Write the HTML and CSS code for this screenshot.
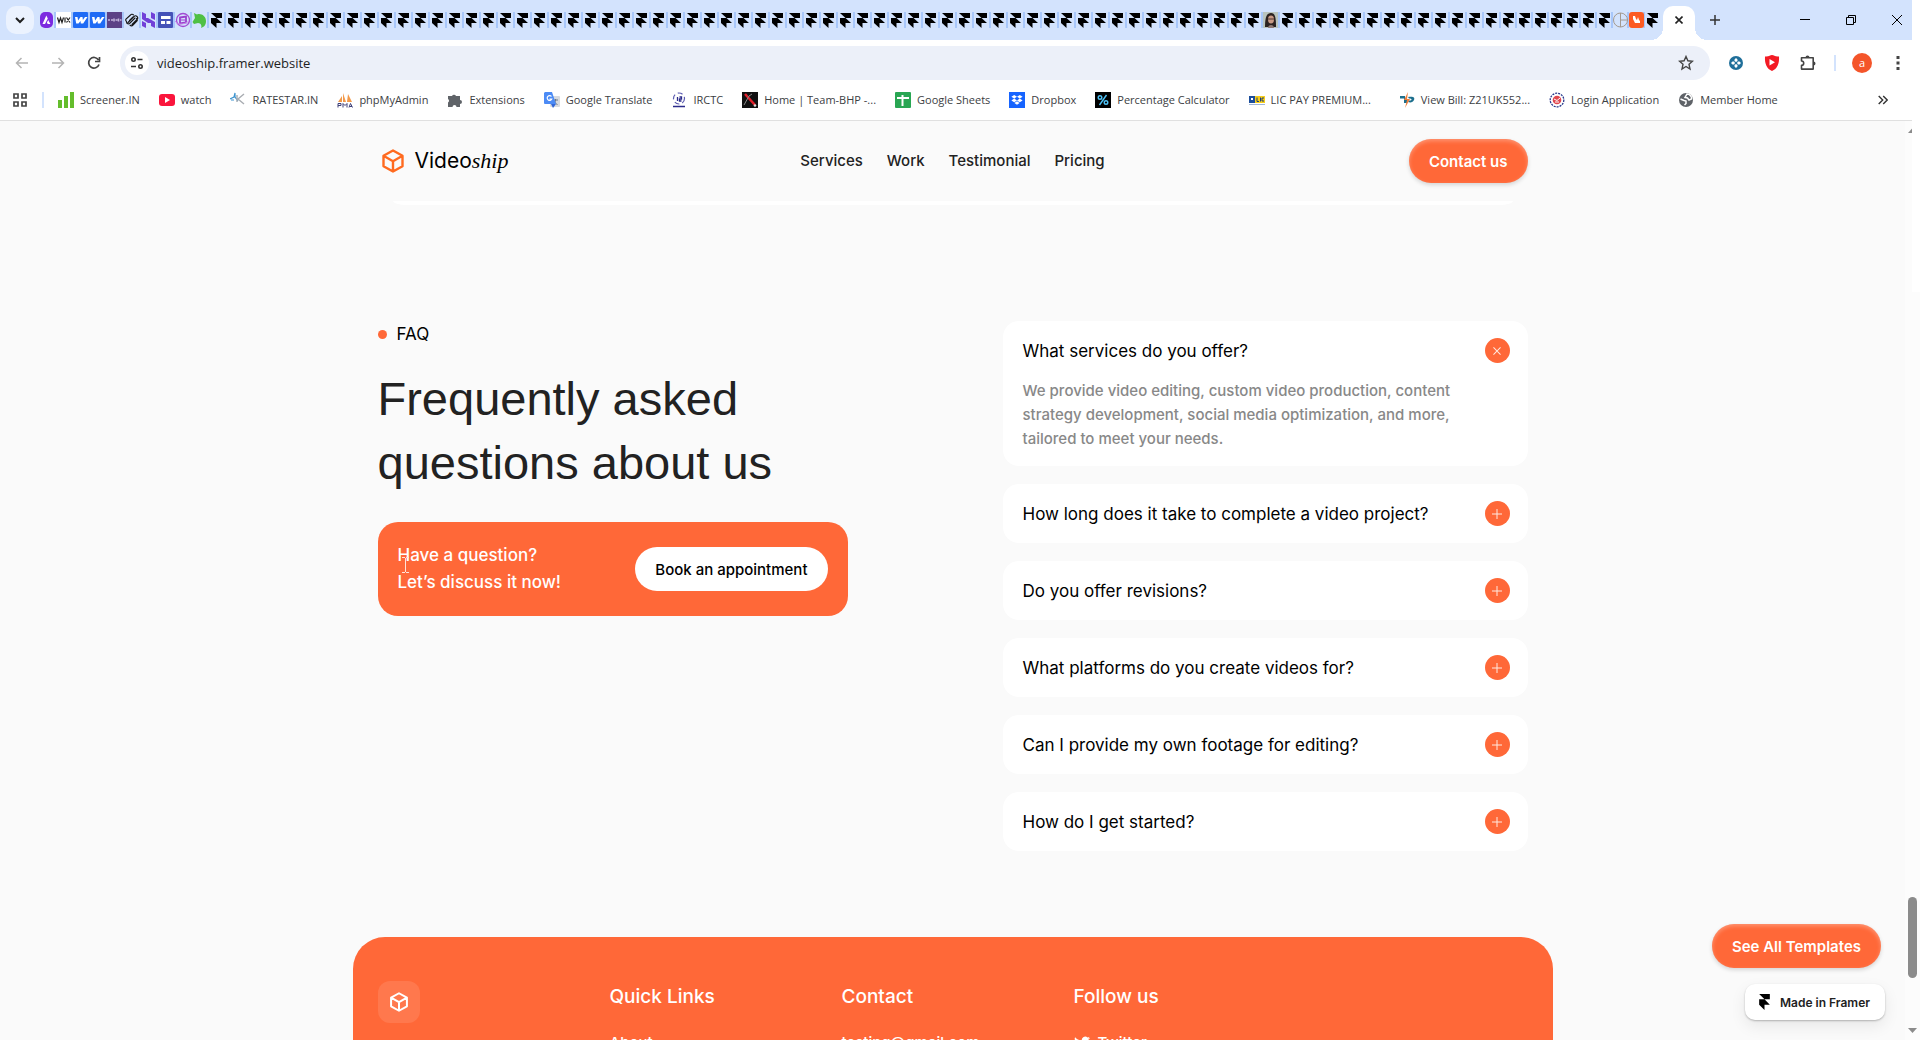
FILE: index.html
```html
<!DOCTYPE html>
<html lang="en">
<head>
<meta charset="utf-8">
<meta name="viewport" content="width=device-width, initial-scale=1">
<title>Videoship</title>
<link rel="stylesheet" href="styles.css">
</head>
<body>
<svg class="defs" aria-hidden="true">
  <symbol id="framer" viewBox="0 0 16 24"><path d="M0 0h16v8H8zM0 8h8l8 8H8v8l-8-8z"/></symbol>
  <symbol id="cube" viewBox="0 0 24 24"><path d="M12 1.500l9.500 5.300v10.400L12 22.500l-9.500-5.300V6.800zM2.500 6.800L12 12.200l9.500-5.400M12 12.200v10.300" fill="none" stroke="currentColor" stroke-width="2.400" stroke-linejoin="round"/></symbol>
  <symbol id="webflow" viewBox="0 0 15 16"><rect width="15" height="16" rx="1" fill="#1f6bf5"/><path d="M2 5h2.500l.6 3.500L7.500 5h2l.4 3L12 5h2.500l-4.300 6.500H7.800L7.500 9l-2 2.500H3.200z" fill="#fff"/></symbol>
  <symbol id="plus" viewBox="0 0 12 12"><path d="M6 1v10M1 6h10" stroke="currentColor" fill="none"/></symbol>
</svg>

<header class="browser">
  <div class="tabstrip">
    <button class="tab-search" aria-label="Search tabs"><svg width="10" height="7" viewBox="0 0 10 7"><path d="M1 1l4 4 4-4" fill="none" stroke="#1f1f1f" stroke-width="2"/></svg></button>
    <div class="tabs">
      <span class="tab"><svg width="15" height="16" viewBox="0 0 15 16"><rect x="1" width="13" height="16" rx="5" fill="#7c2be0"/><path d="M3.500 12l3.800-8.500 1.500 3L6 12zM9.200 8l2.200 4H8.700l-.8-1.500z" fill="#fff"/></svg></span>
      <span class="tab"><svg width="15" height="16" viewBox="0 0 15 16"><rect width="15" height="16" fill="#fff"/><path d="M1.500 5.500l1.500 5 1.500-4.500L6 10.500l1.500-5M9 5.500v5M10.500 5.500l3.500 5M14 5.500l-3.500 5" fill="none" stroke="#222" stroke-width="1.200"/></svg></span>
      <span class="tab"><svg width="15" height="16"><use href="#webflow"/></svg></span>
      <span class="tab"><svg width="15" height="16"><use href="#webflow"/></svg></span>
      <span class="tab"><svg width="15" height="16" viewBox="0 0 15 16"><rect width="15" height="16" fill="#5c4186"/><path d="M1 8h2M4 8h2M7 6.500v3M8.500 8h2M11.500 6.500v3M13 8h1.500" stroke="#c3b5dc" stroke-width="1.600"/></svg></span>
      <span class="tab"><svg width="15" height="16" viewBox="0 0 15 16"><g fill="none" stroke="#161616" stroke-width="1.100" stroke-linecap="round"><path d="M4 10.500L10 4.500a2 2 0 013 3L8 12.500M2.500 9.500a2 2 0 01-.5-2.500L6.500 3a2 2 0 013-.2M5.500 8.500L9 5M11 6L5.500 11.500a2 2 0 01-3-1M12.500 6.500a2 2 0 01.5 2.500L9 13.200a2 2 0 01-3 0"/></g></svg></span>
      <span class="tab"><svg width="15" height="16" viewBox="0 0 15 16"><path d="M1 0l4 2v4h2l7 4v6l-4-2v-3H7L1 7zM10 0l4 2v6l-4-2zM1 9l4 2v5l-4-2z" fill="#7140d8"/></svg></span>
      <span class="tab"><svg width="15" height="16" viewBox="0 0 15 16"><rect width="15" height="16" rx="1" fill="#4452b8"/><path d="M3 4h9.500v3H3zM3 9h4v3H3zM8.500 9h4v3h-4z" fill="#fff"/></svg></span>
      <span class="tab"><svg width="15" height="16" viewBox="0 0 15 16"><circle cx="8" cy="8" r="6.500" fill="none" stroke="#a24bd2" stroke-width="1.300"/><path d="M5 5.500l6-1v6l-6 1z" fill="none" stroke="#9b3fcd" stroke-width="1.800"/><path d="M6 8h4" stroke="#9b3fcd"/><path d="M0 9c2 4 9 4 14 0" fill="none" stroke="#c78ae8"/></svg></span>
      <span class="tab"><svg width="15" height="16" viewBox="0 0 15 16"><path d="M2 1l3 1.500C9 1 14 4 14 9c0 4-2 6-5 7 1-2 0-5-3-5l-4 1-1.500-2L3 6z" fill="#4fc044"/></svg></span>
    </div>
    <button class="active-tab" aria-label="Close tab"><svg width="8" height="8" viewBox="0 0 8 8"><path d="M.5.5l7 7M7.500.5l-7 7" stroke="#222" stroke-width="1.600"/></svg></button>
    <button class="icon-btn new-tab" aria-label="New tab"><svg width="10" height="10" viewBox="0 0 10 10"><path d="M5 0v10M0 5h10" stroke="#333" stroke-width="1.500"/></svg></button>
    <div class="window-controls">
      <button class="icon-btn" aria-label="Minimize"><svg width="10" height="10"><path d="M0 4.500h10" stroke="#000"/></svg></button>
      <button class="icon-btn" aria-label="Restore"><svg width="10" height="10" viewBox="0 0 10 10"><path d="M.5 2.500h7v7h-7zM2.500 2.500v-2h7v7h-2" fill="none" stroke="#000"/></svg></button>
      <button class="icon-btn" aria-label="Close window"><svg width="10" height="10" viewBox="0 0 10 10"><path d="M0 0l10 10M10 0L0 10" stroke="#000"/></svg></button>
    </div>
  </div>

  <div class="toolbar">
    <div class="history">
      <button class="icon-btn" aria-label="Back"><svg width="14" height="12" viewBox="0 0 14 12"><path d="M13 6H1.500M6.500 1l-5 5 5 5" fill="none" stroke="#b4b4b4" stroke-width="1.500"/></svg></button>
      <button class="icon-btn" aria-label="Forward"><svg width="14" height="12" viewBox="0 0 14 12"><path d="M1 6h11.500M7.500 1l5 5-5 5" fill="none" stroke="#b4b4b4" stroke-width="1.500"/></svg></button>
      <button class="icon-btn" aria-label="Reload"><svg width="14" height="14" viewBox="0 0 14 14"><path d="M12 8.500A5.300 5.300 0 1111.500 4M12.500 1v4.500H8" fill="none" stroke="#444" stroke-width="1.700"/></svg></button>
    </div>
    <div class="omnibox">
      <button class="site-info" aria-label="Site information"><svg width="14" height="14" viewBox="0 0 14 14"><g fill="none" stroke="#333" stroke-width="1.600"><circle cx="3.500" cy="3.500" r="1.700"/><path d="M7.500 3.500h5M1 10.500h5"/><circle cx="10.500" cy="10.500" r="1.700"/></g></svg></button>
      <input class="url" type="text" aria-label="Address" value="videoship.framer.website">
      <button class="icon-btn" aria-label="Bookmark this page"><svg width="16" height="16" viewBox="0 0 16 16"><path d="M8 1.500l1.900 4.300 4.600.4-3.500 3.100 1 4.700L8 11.500 4 14l1-4.700L1.500 6.200l4.600-.4z" fill="none" stroke="#444" stroke-width="1.400"/></svg></button>
    </div>
    <div class="extensions">
      <button class="icon-btn" aria-label="Extension"><svg width="14" height="14" viewBox="0 0 14 14"><circle cx="7" cy="7" r="7" fill="#1f6f9a"/><path d="M5.500 3.500L7 2l1.500 1.500V5L7 6 5.500 5zM5.500 10.500L7 12l1.500-1.500V9L7 8 5.500 9zM3.500 5.500L2 7l1.500 1.500H5L6 7 5 5.500zM10.500 5.500L12 7l-1.500 1.500H9L8 7l1-1.500z" fill="#fff"/></svg></button>
      <button class="icon-btn" aria-label="Video ad blocker"><svg width="16" height="16" viewBox="0 0 16 16"><path d="M1 1.500C5 2 6 0 8 0s3 2 7 1.500C15.500 9 13 14 8 16 3 14 .5 9 1 1.500z" fill="#f31b24"/><path d="M5.500 4l5.500 3.200-5.500 3.300z" fill="#fff"/></svg></button>
      <button class="icon-btn" aria-label="Extensions"><svg width="16" height="16" viewBox="0 0 16 16"><path d="M1.500 2.700h11.700v11.400H1.500v-3.700a2.200 2.200 0 000-4.400z" fill="none" stroke="#444" stroke-width="1.600" stroke-linejoin="round"/><path d="M5.500 2.500a2 2 0 014 0zM13.500 6.500a2 2 0 010 4z" fill="#444"/></svg></button>
      <i class="divider"></i>
      <button class="avatar" aria-label="Profile">a</button>
      <button class="icon-btn" aria-label="Menu"><svg width="4" height="14" viewBox="0 0 4 14"><path d="M.5 0h3v3h-3zM.5 5.500h3v3h-3zM.5 11h3v3h-3z" fill="#444"/></svg></button>
    </div>
  </div>

  <nav class="bookmarks" aria-label="Bookmarks">
    <button class="apps" aria-label="Apps"><svg width="14" height="14" viewBox="0 0 14 14"><path d="M1 1h4v4H1zM9 1h4v4H9zM1 9h4v4H1zM9 9h4v4H9z" fill="none" stroke="#444" stroke-width="1.700"/></svg></button>
    <i class="divider"></i>
    <a href="#"><svg width="16" height="16" viewBox="0 0 16 16"><path d="M0 8h4v8H0zM6 4h4v12H6zM12 0h4v16h-4z" fill="#64bd2c"/></svg><span>Screener.IN</span></a>
    <a href="#"><svg width="16" height="16" viewBox="0 0 16 16"><rect y="2" width="16" height="12" rx="3" fill="#fa153c"/><path d="M6 5l5 3-5 3z" fill="#fff"/></svg><span>watch</span></a>
    <a href="#"><svg width="16" height="16" viewBox="0 0 16 16"><path d="M0 7l4-2 1-4v4l3 4M1 8h3" fill="none" stroke="#3d94cf" stroke-width="1.200"/><path d="M14 2L8 7l6 5M7 3v7" fill="none" stroke="#a9adb2" stroke-width="1.400"/></svg><span>RATESTAR.IN</span></a>
    <a href="#"><svg width="16" height="16" viewBox="0 0 16 16"><path d="M1 10L5 4v6zM6 10V1l3 9zM10 10l1-8 4 8z" fill="#f2994a"/><path d="M1 15.500v-4h3v2H1M6 15.500v-4l2 2 2-2v4M12 15.500l1.500-4 2 4M12.500 14.500h2.500" fill="none" stroke="#3d3f78"/></svg><span>phpMyAdmin</span></a>
    <a href="#"><svg width="16" height="16" viewBox="0 0 16 16"><path d="M1 4h4a2.200 2.200 0 014 0h4v4a2 2 0 010 4v3H9.500a2 2 0 00-4 0H1v-4.500a2 2 0 000-3.500z" fill="#5f6368"/></svg><span>Extensions</span></a>
    <a href="#"><svg width="16" height="16" viewBox="0 0 16 16"><rect x="6" y="4" width="10" height="11" rx="1" fill="#d7dadf"/><path d="M9 8h5M11.500 7v1c0 2-1 4-3 5M9.500 9l4 4" fill="none" stroke="#6b7785"/><path d="M1 0h7l4 12H1a1 1 0 01-1-1V1z" fill="#4c8bf5"/><path d="M7.500 4.500A2.400 2.400 0 107.800 7H5.500" fill="none" stroke="#fff" stroke-width="1.200"/><path d="M7 12h5l-3 4z" fill="#3367d6"/></svg><span>Google Translate</span></a>
    <a href="#"><svg width="16" height="16" viewBox="0 0 16 16"><circle cx="8" cy="6.500" r="5.500" fill="none" stroke="#5a5ab0" stroke-width="1.200" stroke-dasharray="5 3"/><path d="M6.500 5v4M8.500 5h2v2h-2v2h2M2 14.500h12" stroke="#2b2b8a" stroke-width="1.300" fill="none"/></svg><span>IRCTC</span></a>
    <a href="#"><svg width="16" height="16" viewBox="0 0 16 16"><rect width="16" height="16" fill="#111"/><path d="M3 2l10 11" stroke="#e3202b" stroke-width="2.500"/><path d="M2 13l5-9 3-2" stroke="#8b8b8b" fill="none"/><circle cx="13" cy="13.500" r="1.300" fill="#ddd"/></svg><span>Home | Team-BHP -...</span></a>
    <a href="#"><svg width="16" height="16" viewBox="0 0 16 16"><rect width="16" height="16" rx="1" fill="#29a653"/><path d="M2 6h12M7.500 3v11" stroke="#fff" stroke-width="2"/></svg><span>Google Sheets</span></a>
    <a href="#"><svg width="16" height="16" viewBox="0 0 16 16"><rect width="16" height="16" fill="#1664ff"/><path d="M5.200 3L8 4.800 5.200 6.600 2.400 4.800zM10.800 3l2.800 1.800-2.800 1.800L8 4.800zM5.200 6.600L8 8.400l-2.800 1.800-2.800-1.800zM10.800 6.600l2.800 1.800-2.800 1.800L8 8.400zM8 9.300l2.600 1.700L8 12.800 5.400 11z" fill="#fff"/></svg><span>Dropbox</span></a>
    <a href="#"><svg width="16" height="16" viewBox="0 0 16 16"><rect width="16" height="16" fill="#000"/><path d="M11.500 3l-7 10" stroke="#4fc3f7" stroke-width="1.400"/><circle cx="5" cy="5.500" r="1.800" fill="none" stroke="#4fc3f7" stroke-width="1.400"/><circle cx="11" cy="10.500" r="1.800" fill="none" stroke="#4fc3f7" stroke-width="1.400"/></svg><span>Percentage Calculator</span></a>
    <a class="clipped" href="#"><svg width="16" height="16" viewBox="0 0 16 16"><path d="M0 4h6v7H0z" fill="#1c4e9c"/><path d="M6 4h10v7H6z" fill="#f7ce1b"/><path d="M2 6h2v2H2z" fill="#fff"/><path d="M8 5.500v4h2M11.500 5.500v4M15 6h-2v3h2" stroke="#1c3f7c" fill="none"/><path d="M0 12.500h16" stroke="#9fb6d8"/></svg><span>LIC PAY PREMIUM...</span></a>
    <a href="#"><svg width="16" height="16" viewBox="0 0 16 16"><path d="M1 4h5v3h2v4H5V6.500H1zM9 5c6-1 7 1 6 3s-3 3-6 2l1-1.500c4 0 3-2 0-2z" fill="#1d6f8d"/><path d="M9 0L5 8h3l-2 8 5-9H8z" fill="#f0803c"/></svg><span>View Bill: Z21UK552...</span></a>
    <a href="#"><svg width="16" height="16" viewBox="0 0 16 16"><circle cx="8" cy="8" r="6.800" fill="none" stroke="#26368b" stroke-width="1.300" stroke-dasharray="2 1"/><circle cx="8" cy="8" r="4.300" fill="#e0464e"/><path d="M5 7l3 1.500L11 6M6 10h4" stroke="#fff" fill="none"/></svg><span>Login Application</span></a>
    <a href="#"><svg width="16" height="16" viewBox="0 0 16 16"><circle cx="8" cy="8" r="7" fill="#5f6368"/><path d="M9 2c3 0 5 3 4.500 5L11 8 9.500 6 7 5.500zM2.500 7L6 8.500l2 .5v2.500L6.500 13" fill="none" stroke="#fff" stroke-width="1.500"/></svg><span>Member Home</span></a>
    <button class="more" aria-label="More bookmarks"><svg width="10" height="10" viewBox="0 0 10 10"><path d="M.7 1l4 4-4 4M5.200 1l4 4-4 4" fill="none" stroke="#333" stroke-width="1.400"/></svg></button>
  </nav>
</header>

<div class="viewport">
  <div class="page">
    <header class="site-header">
      <div class="header-inner">
        <a class="logo" href="#"><svg width="24" height="24"><use href="#cube"/></svg><span class="wordmark">Video<em>ship</em></span></a>
        <nav class="site-nav">
          <a href="#">Services</a><a href="#">Work</a><a href="#">Testimonial</a><a href="#">Pricing</a>
        </nav>
        <button class="pill">Contact us</button>
      </div>
      <div class="card-edge"></div>
    </header>

    <main class="faq">
      <section class="intro">
        <p class="eyebrow">FAQ</p>
        <h1>Frequently asked<br>questions about us</h1>
        <div class="cta">
          <p>Have a question?<br>Let’s discuss it now!</p>
          <button class="book">Book an appointment</button>
          <svg class="caret" width="7" height="16" viewBox="0 0 7 16"><path d="M0 .5h3M4 .5h3M3.500 1v14M0 15.500h3M4 15.500h3" stroke="#ffe3d8" fill="none"/></svg>
        </div>
      </section>
      <section class="questions">
        <article class="item open">
          <button class="question" aria-expanded="true"><span>What services do you offer?</span><i class="toggle"><svg width="12" height="12"><use href="#plus"/></svg></i></button>
          <p class="answer">We provide video editing, custom video production, content<br>strategy development, social media optimization, and more,<br>tailored to meet your needs.</p>
        </article>
        <article class="item"><button class="question" aria-expanded="false"><span>How long does it take to complete a video project?</span><i class="toggle"><svg width="12" height="12"><use href="#plus"/></svg></i></button></article>
        <article class="item"><button class="question" aria-expanded="false"><span>Do you offer revisions?</span><i class="toggle"><svg width="12" height="12"><use href="#plus"/></svg></i></button></article>
        <article class="item"><button class="question" aria-expanded="false"><span>What platforms do you create videos for?</span><i class="toggle"><svg width="12" height="12"><use href="#plus"/></svg></i></button></article>
        <article class="item"><button class="question" aria-expanded="false"><span>Can I provide my own footage for editing?</span><i class="toggle"><svg width="12" height="12"><use href="#plus"/></svg></i></button></article>
        <article class="item"><button class="question" aria-expanded="false"><span>How do I get started?</span><i class="toggle"><svg width="12" height="12"><use href="#plus"/></svg></i></button></article>
      </section>
    </main>

    <footer class="site-footer">
      <div class="col"><span class="badge"><svg width="20" height="20"><use href="#cube"/></svg></span></div>
      <div class="col"><h2>Quick Links</h2><a href="#">About</a></div>
      <div class="col"><h2>Contact</h2><a href="#">testing@gmail.com</a></div>
      <div class="col"><h2>Follow us</h2><a href="#"><svg width="16" height="16" viewBox="0 0 24 24"><path d="M24 4.600c-.9.400-1.800.700-2.800.8 1-.6 1.800-1.600 2.200-2.700-1 .6-2 1-3.100 1.200A4.900 4.900 0 0011.900 8.400C7.800 8.200 4.200 6.200 1.700 3.200c-1.300 2.200-.7 5.100 1.500 6.600-.8 0-1.600-.2-2.200-.6 0 2.300 1.600 4.400 3.900 4.900-.7.200-1.500.2-2.200.1.600 2 2.400 3.400 4.600 3.400A9.900 9.900 0 010 19.500 14 14 0 007.500 21.700c9.100 0 14.300-7.700 14-14.600 1-.7 1.800-1.600 2.500-2.500z" fill="#fff"/></svg>Twitter</a></div>
    </footer>
  </div>

  <div class="floating">
    <button class="pill">See All Templates</button>
    <a class="made-in" href="#"><svg width="11" height="16"><use href="#framer"/></svg>Made in Framer</a>
  </div>

  <div class="scrollbar">
    <svg width="9" height="5" viewBox="0 0 9 5"><path d="M0 5l4.500-5L9 5z" fill="#8b8b8b"/></svg>
    <div class="thumb"></div>
    <svg width="9" height="5" viewBox="0 0 9 5"><path d="M0 0l4.500 5L9 0z" fill="#8b8b8b"/></svg>
  </div>
  <div class="window-edge"></div>
</div>
<script src="tabs.js"></script>
</body>
</html>
```
FILE: tabs.js
```javascript
// Fills the tab strip with the remaining open tabs.
const icons = {
  framer: '<svg width="11" height="15" viewBox="0 0 16 24" preserveAspectRatio="none"><path d="M0 0h16v8H8zM0 8h8l8 8H8v8l-8-8z"/></svg>',
  photo: '<svg width="15" height="16" viewBox="0 0 15 16"><rect width="15" height="16" fill="#b9c4bd"/><path d="M2 15C2 4 4 1 8 1s5 4 5 14z" fill="#2b2220"/><ellipse cx="8" cy="7.500" rx="3" ry="4" fill="#c99a85"/><path d="M5 7h6" stroke="#4a3530"/><path d="M5 16c0-4 6-4 6 0z" fill="#8f7a74"/></svg>',
  circle: '<svg width="15" height="16" viewBox="0 0 15 16"><circle cx="7.500" cy="8" r="7" fill="none" stroke="#a49a90"/><path d="M7.500 1v14M7.500 8h7" stroke="#a49a90"/></svg>',
  orange: '<svg width="15" height="16" viewBox="0 0 15 16"><rect width="15" height="16" rx="3" fill="#fc5b23"/><path d="M4 4h2l1 3 1 1 1-3 1 3 1 1v2H6L4 7z" fill="#fff"/></svg>'
};
const runs = [['framer', 62], ['photo', 1], ['framer', 13], ['framer', 7, true], ['circle', 1, true], ['orange', 1, true], ['framer', 1, true]];
const strip = document.querySelector('.tabs');
for (const [icon, count, narrow] of runs) {
  for (let i = 0; i < count; i++) {
    const tab = document.createElement('span');
    tab.className = narrow ? 'tab narrow' : 'tab';
    tab.innerHTML = icons[icon];
    strip.append(tab);
  }
}
```
FILE: styles.css
```css
* { box-sizing: border-box; }
html, body { height: 100%; }
body {
  margin: 0;
  display: flex;
  flex-direction: column;
  overflow: hidden;
  background: #fff;
  color: #000;
  font-family: Inter, "Liberation Sans", sans-serif;
}
button { border: 0; padding: 0; background: none; color: inherit; font: inherit; }
a { color: inherit; text-decoration: none; }
h1, h2, p { margin: 0; }
svg { display: block; flex: none; }
.defs { position: absolute; width: 0; height: 0; }

/* Browser window */
.browser { flex: none; margin-right: 8px; border-bottom: 1px solid #e0e0e0; font-family: "Open Sans", "Noto Sans", sans-serif; }
.icon-btn { display: grid; place-items: center; width: 36px; height: 34px; }
.divider { width: 2px; height: 16px; background: #d3e3fd; }

.tabstrip { display: flex; align-items: center; height: 40px; padding-left: 6px; background: #d3e3fd; }
.tab-search { display: grid; place-items: center; width: 28px; height: 28px; margin-right: 5px; border-radius: 10px; background: #ebf2fe; }
.tabs { display: flex; }
.tab { display: grid; place-items: center; width: 17px; height: 16px; border-right: 2px solid #a8c7fa; }
.tab.narrow { width: 16px; }
.tab:last-child { border-color: transparent; }
.active-tab { position: relative; display: grid; place-items: center; align-self: flex-end; width: 32px; height: 34px; margin-left: 2px; padding-bottom: 6px; border-radius: 10px 10px 0 0; background: #fff; }
.active-tab::before, .active-tab::after { content: ""; position: absolute; bottom: 0; width: 12px; height: 12px; }
.active-tab::before { right: 100%; background: radial-gradient(circle at 0 0, transparent 12px, #fff 12px); }
.active-tab::after { left: 100%; background: radial-gradient(circle at 100% 0, transparent 12px, #fff 12px); }
.new-tab { margin-left: 2px; }
.window-controls { display: flex; margin-left: auto; }
.window-controls .icon-btn { width: 46px; }
.window-controls .icon-btn:last-child { width: 38px; padding-left: 8px; }

.toolbar { display: flex; align-items: center; height: 46px; padding: 0 0 0 4px; }
.history { display: flex; margin-right: 8px; }
.omnibox { display: flex; align-items: center; flex: 1; height: 34px; padding: 0 6px 0 5px; border-radius: 17px; background: #ecf0f9; }
.site-info { display: grid; place-items: center; width: 24px; height: 24px; border-radius: 50%; background: #fff; }
.url { flex: 1; min-width: 0; margin-left: 8px; padding: 0; border: 0; outline: 0; background: none; color: #1f1f1f; font: 13px/20px "Open Sans", "Noto Sans", sans-serif; }
.extensions { display: flex; align-items: center; padding-left: 8px; }
.extensions .divider { margin: 0 16px 0 8px; }
.avatar { width: 20px; height: 20px; border-radius: 50%; background: #f4552a; color: #fff; font-size: 11px; line-height: 18px; }
.extensions .avatar + .icon-btn { width: 28px; margin-left: 12px; }

.bookmarks { display: flex; align-items: center; height: 34px; padding: 0 24px 6px 13px; color: #3c4043; font-size: 11px; line-height: 16px; }
.bookmarks .divider { margin: 0 14px 0 15px; }
.bookmarks a { display: flex; align-items: center; gap: 6px; margin-right: 19px; white-space: nowrap; }
.bookmarks .clipped { margin-right: 28px; }
.more { margin-left: auto; }

/* Page area */
.viewport { position: relative; display: flex; flex: 1; min-height: 0; background: #fafafa; }
.page { display: flex; flex-direction: column; flex: 1; min-width: 0; overflow: hidden; }
.scrollbar { display: flex; flex-direction: column; align-items: center; width: 15px; padding: 7px 0; background: #fcfcfc; }
.scrollbar .thumb { width: 9px; height: 81px; margin: auto 0 50px; border-radius: 5px; background: #8b8b8b; }
.window-edge { position: absolute; top: 0; right: 0; width: 8px; height: 171px; background: #fff; }

.site-header { flex: none; }
.header-inner { display: grid; grid-template-columns: 1fr auto 1fr; align-items: center; width: 100%; max-width: 1150px; height: 80px; margin: 0 auto; }
.logo { display: flex; align-items: center; gap: 10px; padding-left: 3px; }
.logo svg { color: #ff6a1f; }
.wordmark { font-size: 21px; line-height: 28px; }
.wordmark em { font: italic 22px/28px "Liberation Serif", serif; }
.site-nav { display: flex; gap: 24px; color: #222; font-size: 15px; font-weight: 500; line-height: 24px; }
.header-inner .pill { justify-self: end; }
.pill {
  height: 44px;
  padding: 0 20px;
  border-radius: 22px;
  background: #ff6838;
  box-shadow: inset 0 2px 4px rgba(255, 255, 255, .3), 0 2px 4px rgba(0, 0, 0, .15);
  color: #fff;
  font-size: 15px;
  font-weight: 600;
}
.card-edge { max-width: 1120px; height: 4px; margin: 0 auto; border-radius: 0 0 14px 14px / 0 0 4px 4px; background: #fff; }

.faq { display: flex; justify-content: space-between; align-items: flex-start; width: 100%; max-width: 1150px; margin: 0 auto; padding: 116px 0 86px; }
.intro { width: 470px; }
.eyebrow { display: flex; align-items: center; gap: 10px; font-size: 17px; line-height: 26px; }
.eyebrow::before { content: ""; width: 9px; height: 9px; border-radius: 50%; background: #ff6838; }
h1 { margin-top: 20px; color: #222; font: 400 47px/64px "Liberation Sans", Arial, sans-serif; }
.cta { position: relative; display: flex; justify-content: space-between; align-items: center; height: 94px; margin-top: 27px; padding: 0 20px; border-radius: 20px; background: #ff6838; }
.cta p { color: #fff; font-size: 17px; font-weight: 500; line-height: 27px; }
.book { height: 44px; padding: 0 20px; border-radius: 22px; background: #fff; font-size: 15px; font-weight: 500; }
.caret { position: absolute; left: 24px; top: 35px; }

.questions { display: flex; flex-direction: column; gap: 18px; width: 525px; }
.item { padding: 17px 18px 17px 20px; border-radius: 16px; background: #fff; }
.question { display: flex; justify-content: space-between; align-items: center; width: 100%; height: 25px; font-size: 17px; text-align: left; }
.toggle { display: grid; place-items: center; width: 25px; height: 25px; border-radius: 50%; background: #ff6838; color: #ffe9e0; }
.open { padding-bottom: 15px; }
.open .toggle svg { transform: rotate(45deg); }
.answer { padding: 16px 0 0; color: #888; font-size: 15px; font-weight: 500; line-height: 24px; }

.site-footer { display: grid; grid-template-columns: repeat(5, 232px); flex: 1 0 auto; width: 100%; max-width: 1200px; margin: 0 auto; padding: 44px 25px 0; border-radius: 32px 32px 0 0; background: #ff6838; color: #fff; }
.badge { display: grid; place-items: center; width: 42px; height: 42px; border-radius: 12px; background: #ff784d; }
.site-footer h2 { margin-bottom: 18px; font-size: 19px; font-weight: 500; line-height: 32px; }
.site-footer .col > a { display: flex; align-items: center; gap: 8px; font-size: 15px; font-weight: 500; line-height: 24px; }

.floating { position: absolute; right: 35px; bottom: 20px; display: flex; flex-direction: column; align-items: flex-end; gap: 16px; }
.floating .pill { margin-right: 4px; }
.made-in { display: flex; align-items: center; gap: 10px; height: 36px; padding: 0 15px 0 14px; border-radius: 10px; background: #fff; box-shadow: 0 1px 2px rgba(0, 0, 0, .25), 0 6px 16px rgba(0, 0, 0, .08); color: #222; font-size: 12px; font-weight: 600; }
```
